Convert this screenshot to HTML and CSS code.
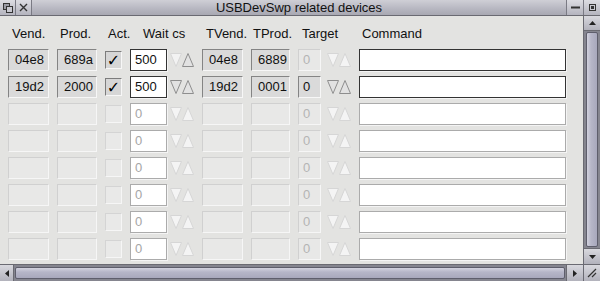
FILE: index.html
```html
<!DOCTYPE html>
<html lang="en">
<head>
    <meta charset="UTF-8">
    <title>USBDevSwp related devices</title>
    <link rel="stylesheet" href="styles.css">
</head>
<body>
    <svg xmlns="http://www.w3.org/2000/svg" style="display: none;">
        <symbol id="arr-on" viewBox="0 0 24 16">
            <path d="M0.5 1.5 L11.5 1.5 L6 14.5 Z" fill="#e2e2e2" stroke="#8e8e8e" />
            <path d="M12.5 14.5 L23.5 14.5 L18 1.5 Z" fill="#e2e2e2" stroke="#8e8e8e" />
        </symbol>
        <symbol id="arr-up" viewBox="0 0 24 16">
            <path d="M0.5 1.5 L11.5 1.5 L6 14.5 Z" fill="#f2f2f2" stroke="#d6d6d6" />
            <path d="M12.5 14.5 L23.5 14.5 L18 1.5 Z" fill="#e2e2e2" stroke="#8e8e8e" />
        </symbol>
        <symbol id="arr-off" viewBox="0 0 24 16">
            <path d="M0.5 1.5 L11.5 1.5 L6 14.5 Z" fill="#f4f4f4" stroke="#d6d6d6" />
            <path d="M12.5 14.5 L23.5 14.5 L18 1.5 Z" fill="#f4f4f4" stroke="#d6d6d6" />
        </symbol>
    </svg>

    <div class="window">
        <!-- Barra de titulo -->
        <div class="titlebar">
            <div class="tbtn">
                <svg width="10" height="10" viewBox="0 0 10 10">
                    <rect x="0.5" y="0.5" width="6" height="6" fill="#9a9aa4" stroke="#333" />
                    <rect x="3.5" y="3.5" width="6" height="6" fill="#c8c8d0" stroke="#333" />
                </svg>
            </div>
            <div class="tbtn">
                <svg width="9" height="9" viewBox="0 0 9 9">
                    <path d="M1 1 L8 8 M8 1 L1 8" stroke="#333" stroke-width="1.4" />
                </svg>
            </div>
            <div class="title">USBDevSwp related devices</div>
            <div class="tbtn wide">
                <svg width="9" height="3" viewBox="0 0 9 3">
                    <rect x="0" y="0.5" width="9" height="2" fill="#333" />
                </svg>
            </div>
            <div class="tbtn wide">
                <svg width="7" height="7" viewBox="0 0 7 7">
                    <rect x="0.5" y="0.5" width="6" height="6" fill="#c8c8d0" stroke="#333" />
                    <rect x="2" y="2" width="3" height="3" fill="#333" />
                </svg>
            </div>
        </div>

        <div class="main">
            <!-- Tabela de dispositivos -->
            <div class="content">
                <div class="row head">
                    <span class="h1">Vend.</span>
                    <span class="h2">Prod.</span>
                    <span class="h3">Act.</span>
                    <span class="h4">Wait cs</span>
                    <span class="h5">TVend.</span>
                    <span class="h6">TProd.</span>
                    <span class="h7">Target</span>
                    <span class="h8">Command</span>
                </div>

                <div class="row">
                    <span class="fld show">04e8</span>
                    <span class="fld show">689a</span>
                    <span class="chk on">✓</span>
                    <span class="spin"><span class="fld edit">500</span><svg class="arr"><use href="#arr-up" /></svg></span>
                    <span class="fld show">04e8</span>
                    <span class="fld show">6889</span>
                    <span class="spin"><span class="fld off tgt">0</span><svg class="arr wide"><use href="#arr-off" /></svg></span>
                    <span class="fld edit"></span>
                </div>

                <div class="row">
                    <span class="fld show">19d2</span>
                    <span class="fld show">2000</span>
                    <span class="chk on">✓</span>
                    <span class="spin"><span class="fld edit">500</span><svg class="arr"><use href="#arr-on" /></svg></span>
                    <span class="fld show">19d2</span>
                    <span class="fld show">0001</span>
                    <span class="spin"><span class="fld show tgt">0</span><svg class="arr wide"><use href="#arr-on" /></svg></span>
                    <span class="fld edit"></span>
                </div>

                <div class="row">
                    <span class="fld off"></span>
                    <span class="fld off"></span>
                    <span class="chk"></span>
                    <span class="spin"><span class="fld edit dim">0</span><svg class="arr"><use href="#arr-off" /></svg></span>
                    <span class="fld off"></span>
                    <span class="fld off"></span>
                    <span class="spin"><span class="fld off tgt">0</span><svg class="arr wide"><use href="#arr-off" /></svg></span>
                    <span class="fld edit dim"></span>
                </div>

                <div class="row">
                    <span class="fld off"></span>
                    <span class="fld off"></span>
                    <span class="chk"></span>
                    <span class="spin"><span class="fld edit dim">0</span><svg class="arr"><use href="#arr-off" /></svg></span>
                    <span class="fld off"></span>
                    <span class="fld off"></span>
                    <span class="spin"><span class="fld off tgt">0</span><svg class="arr wide"><use href="#arr-off" /></svg></span>
                    <span class="fld edit dim"></span>
                </div>

                <div class="row">
                    <span class="fld off"></span>
                    <span class="fld off"></span>
                    <span class="chk"></span>
                    <span class="spin"><span class="fld edit dim">0</span><svg class="arr"><use href="#arr-off" /></svg></span>
                    <span class="fld off"></span>
                    <span class="fld off"></span>
                    <span class="spin"><span class="fld off tgt">0</span><svg class="arr wide"><use href="#arr-off" /></svg></span>
                    <span class="fld edit dim"></span>
                </div>

                <div class="row">
                    <span class="fld off"></span>
                    <span class="fld off"></span>
                    <span class="chk"></span>
                    <span class="spin"><span class="fld edit dim">0</span><svg class="arr"><use href="#arr-off" /></svg></span>
                    <span class="fld off"></span>
                    <span class="fld off"></span>
                    <span class="spin"><span class="fld off tgt">0</span><svg class="arr wide"><use href="#arr-off" /></svg></span>
                    <span class="fld edit dim"></span>
                </div>

                <div class="row">
                    <span class="fld off"></span>
                    <span class="fld off"></span>
                    <span class="chk"></span>
                    <span class="spin"><span class="fld edit dim">0</span><svg class="arr"><use href="#arr-off" /></svg></span>
                    <span class="fld off"></span>
                    <span class="fld off"></span>
                    <span class="spin"><span class="fld off tgt">0</span><svg class="arr wide"><use href="#arr-off" /></svg></span>
                    <span class="fld edit dim"></span>
                </div>

                <div class="row">
                    <span class="fld off"></span>
                    <span class="fld off"></span>
                    <span class="chk"></span>
                    <span class="spin"><span class="fld edit dim">0</span><svg class="arr"><use href="#arr-off" /></svg></span>
                    <span class="fld off"></span>
                    <span class="fld off"></span>
                    <span class="spin"><span class="fld off tgt">0</span><svg class="arr wide"><use href="#arr-off" /></svg></span>
                    <span class="fld edit dim"></span>
                </div>
            </div>

            <!-- Barra de rolagem vertical -->
            <div class="vscroll">
                <div class="sbtn">
                    <svg width="7" height="4" viewBox="0 0 7 4"><path d="M0 4 L7 4 L3.5 0 Z" fill="#222" /></svg>
                </div>
                <div class="trough"><div class="slider"></div></div>
                <div class="sbtn">
                    <svg width="7" height="4" viewBox="0 0 7 4"><path d="M0 0 L7 0 L3.5 4 Z" fill="#222" /></svg>
                </div>
            </div>
        </div>

        <!-- Barra de rolagem horizontal -->
        <div class="hscroll">
            <div class="sbtn narrow">
                <svg width="4" height="7" viewBox="0 0 4 7"><path d="M4 0 L4 7 L0 3.5 Z" fill="#222" /></svg>
            </div>
            <div class="trough"><div class="slider"></div></div>
            <div class="sbtn">
                <svg width="4" height="7" viewBox="0 0 4 7"><path d="M0 0 L0 7 L4 3.5 Z" fill="#222" /></svg>
            </div>
            <div class="sbtn corner">
                <svg width="10" height="10" viewBox="0 0 10 10">
                    <path d="M1 9 L9 1 M5 9 L9 5" stroke="#333" stroke-width="1.2" />
                </svg>
            </div>
        </div>
    </div>
</body>
</html>
```

FILE: styles.css
```css
body {
    margin: 0;
    font-family: "Liberation Sans", Arial, sans-serif;
    font-size: 13px;
    color: #111;
}

.window {
    width: 600px;
    height: 281px;
    display: flex;
    flex-direction: column;
    background: #e3e3e1;
    overflow: hidden;
}

/* Titulo */
.titlebar {
    height: 15px;
    display: flex;
    background: linear-gradient(#cfcfd6, #b6b6c0 60%, #a8a8b2);
    border-bottom: 1px solid #6a6a72;
}

.tbtn {
    width: 15px;
    display: flex;
    align-items: center;
    justify-content: center;
    background: linear-gradient(#dcdce2, #b4b4be);
    border-right: 1px solid #7a7a84;
}

.tbtn.wide {
    width: 16px;
    border-right: none;
    border-left: 1px solid #7a7a84;
}

.title {
    flex: 1;
    text-align: center;
    line-height: 15px;
    color: #111;
}

.main {
    flex: 1;
    display: flex;
    min-height: 0;
}

/* Conteudo */
.content {
    flex: 1;
    padding: 11px 0 0 8px;
    border-right: 1px solid #6a6a72;
}

.row {
    display: grid;
    grid-template-columns: 41px 40px 17px 64px 41px 39px 53px 207px;
    column-gap: 8px;
    height: 22px;
    margin-bottom: 5px;
    align-items: center;
}

.row.head {
    height: 22px;
    margin-bottom: 0;
    align-items: start;
    line-height: 13px;
}

.h1 { padding-left: 4px; }
.h2 { padding-left: 3px; }
.h3 { padding-left: 3px; }
.h4 { padding-left: 13px; }
.h5 { padding-left: 4px; }
.h6 { padding-left: 2px; }
.h7 { padding-left: 4px; }
.h8 { padding-left: 3px; }

.fld {
    box-sizing: border-box;
    height: 22px;
    padding-left: 6px;
    line-height: 20px;
    border: 1px solid;
    white-space: nowrap;
}

.fld.show {
    background: #dadada;
    border-color: #848484 #f7f7f7 #f7f7f7 #848484;
}

.fld.off {
    background: #e8e8e7;
    border-color: #d0d0d0 #f6f6f6 #f6f6f6 #d0d0d0;
    color: #b4b4b4;
}

.fld.edit {
    background: #fff;
    border-color: #333;
    padding-left: 4px;
    box-shadow: 1px 1px 0 #f4f4f4;
}

.fld.edit.dim {
    border-color: #ababab;
    color: #a6a6a6;
}

.fld.tgt {
    width: 23px;
    padding-left: 4px;
}

.chk {
    box-sizing: border-box;
    height: 18px;
    border: 1px solid;
    background: #e9e9e8;
    border-color: #d4d4d4 #f6f6f6 #f6f6f6 #d4d4d4;
    text-align: center;
    line-height: 17px;
    font-family: "DejaVu Sans", sans-serif;
    font-size: 16px;
}

.chk.on {
    background: #d6d6d6;
    border-color: #7c7c7c #f7f7f7 #f7f7f7 #7c7c7c;
    color: #000;
}

.spin {
    display: flex;
    align-items: center;
}

.spin .fld.edit {
    width: 37px;
}

.arr {
    width: 24px;
    height: 16px;
    margin-left: 3px;
}

.arr.wide {
    margin-left: 6px;
}

/* Barras de rolagem */
.vscroll {
    width: 16px;
    display: flex;
    flex-direction: column;
    background: #84848f;
}

.sbtn {
    height: 15px;
    width: 16px;
    display: flex;
    align-items: center;
    justify-content: center;
    background: linear-gradient(#d8d8de, #b2b2bc);
    border-bottom: 1px solid #6a6a72;
    box-sizing: border-box;
}

.vscroll .sbtn:last-child {
    border-bottom: none;
    border-top: 1px solid #6a6a72;
    height: 16px;
}

.trough {
    flex: 1;
    background: #85858f;
    padding: 1px 2px;
    display: flex;
}

.slider {
    flex: 1;
    border-radius: 2px;
    background: linear-gradient(90deg, #d2d2de, #b6b6c8 40%, #a8a8bc);
    border: 1px solid #5e5e6c;
}

.hscroll {
    height: 16px;
    display: flex;
    border-top: 1px solid #6a6a72;
    background: #84848f;
}

.hscroll .sbtn {
    height: 16px;
    width: 17px;
    border-bottom: none;
    border-left: 1px solid #6a6a72;
}

.hscroll .sbtn.narrow {
    width: 14px;
    border-left: none;
    border-right: 1px solid #6a6a72;
}

.hscroll .trough {
    padding: 2px 1px;
}

.hscroll .slider {
    background: linear-gradient(#d2d2de, #b6b6c8 40%, #a8a8bc);
}
```
